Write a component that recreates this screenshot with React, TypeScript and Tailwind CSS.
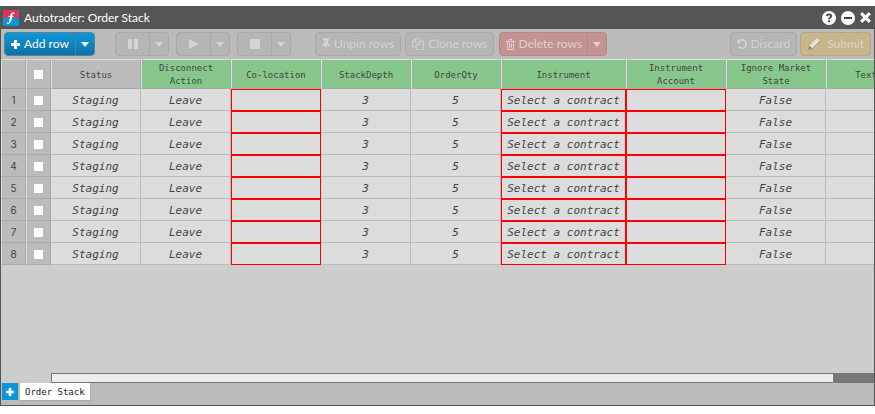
import type { ReactNode } from "react";

const columns = [
  { name: "Status", plain: true },
  { name: "Disconnect Action" },
  { name: "Co-location" },
  { name: "StackDepth" },
  { name: "OrderQty" },
  { name: "Instrument" },
  { name: "Instrument Account" },
  { name: "Ignore Market State" },
  { name: "Text" },
];

const rows = Array.from({ length: 8 }, () => ["Staging", "Leave", "", "3", "5", "Select a contract", "", "False", ""]);
const required = [2, 5, 6];

const grey = "border-[#a9a9a9] bg-[#b5b5b5] text-[#d4d4d4]";
const headCell = "border border-t-[#ddd] border-r-[#a9a9a9] border-b-[#a9a9a9] border-l-[#ddd]";
const sideCell = "border border-t-[#bbb] border-r-[#a9a9a9] border-b-[#a9a9a9] border-l-[#ddd] bg-[#bbb] p-0";

const paths = {
  clone:
    "M1696 384q40 0 68 28t28 68v1216q0 40-28 68t-68 28h-960q-40 0-68-28t-28-68v-288h-544q-40 0-68-28t-28-68v-672q0-40 20-88t48-76l408-408q28-28 76-48t88-20h416q40 0 68 28t28 68v328q68-40 128-40h416zm-544 213l-299 299h299v-299zm-640-384l-299 299h299v-299zm196 647l316-316v-416h-384v416q0 40-28 68t-68 28h-416v640h512v-256q0-40 20-88t48-76zm956 804v-1152h-384v416q0 40-28 68t-68 28h-416v640h896z",
  undo:
    "M1664 896q0 156-61 298t-164 245-245 164-298 61q-172 0-327-72.500t-264-204.500q-7-10-6.500-22.500t8.500-20.500l137-138q10-9 25-9 16 2 23 12 73 95 179 147t225 52q104 0 198.500-40.500t163.500-109.500 109.500-163.500 40.500-198.500-40.500-198.500-109.500-163.500-163.500-109.500-198.500-40.500q-98 0-188 35.500t-160 101.500l137 138q31 30 14 69-17 40-59 40h-448q-26 0-45-19t-19-45v-448q0-42 40-59 39-17 69 14l130 129q107-101 244.500-156.500t284.500-55.500q156 0 298 61t245 164 164 245 61 298z",
  pin:
    "M800 864v-448q0-14-9-23t-23-9-23 9-9 23v448q0 14 9 23t23 9 23-9 9-23zm672 352q0 26-19 45t-45 19h-429l-51 483q-2 12-10.500 20.500t-20.500 8.500h-1q-27 0-32-27l-76-485h-404q-26 0-45-19t-19-45q0-123 78.500-221.500t177.500-98.500v-512q-52 0-90-38t-38-90 38-90 90-38h640q52 0 90 38t38 90-38 90-90 38v512q99 0 177.500 98.500t78.500 221.500z",
};

function Glyph({ name, box = "0 0 1792 1792", className }: { name: keyof typeof paths; box?: string; className: string }) {
  return (
    <svg viewBox={box} className={`shrink-0 ${className}`} fill="currentColor" aria-hidden="true">
      <path d={paths[name]} />
    </svg>
  );
}

function Plus({ className }: { className: string }) {
  return (
    <svg viewBox="0 0 9 9" className={`shrink-0 ${className}`} stroke="currentColor" strokeWidth="3" aria-hidden="true">
      <path d="M4.500 0v9M0 4.500h9" />
    </svg>
  );
}

function Group({ label, children, tone = grey }: { label: string; children: ReactNode; tone?: string }) {
  return (
    <div className={`flex h-6 shrink-0 overflow-hidden rounded border ${tone}`}>
      {children}
      <button aria-label={`${label} options`} className="flex w-[19px] items-center justify-center border-l border-inherit">
        <svg viewBox="0 0 8 5" className="h-[5px] w-2" fill="currentColor" aria-hidden="true">
          <path d="M0 0h8L4 5z" />
        </svg>
      </button>
    </div>
  );
}

function Single({ children, tone = grey }: { children: ReactNode; tone?: string }) {
  return <button className={`flex h-6 shrink-0 items-center gap-1 whitespace-nowrap rounded border px-1.5 ${tone}`}>{children}</button>;
}

function Toolbar() {
  return (
    <div className="flex h-[30px] shrink-0 items-center bg-[#bbb] px-[3px] text-[12px]">
      <Group label="Add row" tone="border-[#57809a] bg-linear-to-b from-[#1097d8] to-[#0c74a8] text-white">
        <button className="flex w-[70px] items-center justify-center gap-1 whitespace-nowrap text-shadow-2xs">
          <Plus className="size-[9px]" />
          Add row
        </button>
      </Group>
      <div className="ml-5 flex gap-[7px]">
        <Group label="Pause">
          <button aria-label="Pause" className="flex w-[33px] items-center justify-center">
            <svg viewBox="0 0 10 10" className="size-2.5" fill="currentColor" aria-hidden="true">
              <path d="M0 0h4v10H0zM6 0h4v10H6z" />
            </svg>
          </button>
        </Group>
        <Group label="Play">
          <button aria-label="Play" className="flex w-[33px] items-center justify-center">
            <svg viewBox="0 0 10 10" className="size-2.5" fill="currentColor" aria-hidden="true">
              <path d="M0 0l10 5-10 5z" />
            </svg>
          </button>
        </Group>
        <Group label="Stop">
          <button aria-label="Stop" className="flex w-[33px] items-center justify-center">
            <span className="size-2.5 bg-current" />
          </button>
        </Group>
      </div>
      <div className="ml-6 flex gap-1">
        <Single><Glyph name="pin" box="320 100 1152 1692" className="h-3 w-2" />Unpin rows</Single>
        <Single><Glyph name="clone" className="size-3" />Clone rows</Single>
      </div>
      <div className="ml-[5px]">
        <Group label="Delete rows" tone="border-[#b58888] bg-[#c39393] text-[#e0d0d0]">
          <button className="flex w-[87px] items-center justify-center gap-1 whitespace-nowrap">
            <svg viewBox="0 0 9 11" className="h-[11px] w-[9px] shrink-0" fill="none" stroke="currentColor" aria-hidden="true">
              <path d="M0 2.500h9M3 2.500v-2h3v2M1.500 2.500v8h6v-8M3.500 4v5M5.500 4v5" />
            </svg>
            Delete rows
          </button>
        </Group>
      </div>
      <div className="ml-auto flex gap-[3px]">
        <Single><Glyph name="undo" box="128 128 1536 1536" className="size-2.5" />Discard</Single>
        <Single tone="border-[#b3a78c] bg-[#c9b58a] text-[#dcd6c8]">
          <svg viewBox="0 0 14 14" className="mr-0.5 size-3.5 shrink-0" aria-hidden="true">
            <path d="M1.500 12.500l1-4L10 1l3 3-7.500 7.500z" fill="#e8e4da" />
            <path d="M1 13l1.500-4.500L5.500 11.500z" fill="#8d8878" />
            <path d="M4.500 12.500L13 4" stroke="#9c968a" />
          </svg>
          Submit
        </Single>
      </div>
    </div>
  );
}

export default function App() {
  return (
    <div className="flex h-screen flex-col bg-white pt-1.5 pb-2 font-[Lato,sans-serif]">
      <main className="flex min-h-0 flex-1 flex-col border-x border-b border-[#555] bg-[#cdcdcd]">
        <header className="flex h-[23px] shrink-0 items-center bg-[#555] px-0.5 text-white">
          <svg viewBox="0 0 16 16" className="size-4" aria-hidden="true">
            <path fill="#d63a54" d="M0 0h16v8H0z" />
            <path fill="#0b95d8" d="M0 8h16v8H0z" />
            <path fill="none" stroke="#fff" strokeWidth="1.200" strokeLinecap="round" d="M11 3.400C9.700 2.100 8.900 3.400 8.500 5L7 11c-.5 2-1.300 2.900-2.500 2M6 6.500h4" />
            <path stroke="#fff" strokeWidth="2" d="M8.600 4.500L7.200 11" />
          </svg>
          <h1 className="ml-[5px] text-[12px]">Autotrader: Order Stack</h1>
          <div className="ml-auto flex items-center gap-[5px] pr-px">
            <button aria-label="Help">
              <svg viewBox="0 0 14 14" className="block size-3.5" aria-hidden="true">
                <circle cx="7" cy="7" r="7" fill="#fff" />
                <path d="M4.800 5.200C5 3.800 6 3.400 7 3.400c1.200 0 2.200.7 2.200 1.800C9.200 6.600 7 6.600 7 8.300" fill="none" stroke="#444" strokeWidth="1.800" />
                <path d="M6 9.300h2v1.900H6z" fill="#444" />
              </svg>
            </button>
            <button aria-label="Minimise">
              <svg viewBox="0 0 14 14" className="block size-3.5" aria-hidden="true">
                <circle cx="7" cy="7" r="7" fill="#fff" />
                <path d="M3 6h8v2H3z" fill="#444" />
              </svg>
            </button>
            <button aria-label="Close">
              <svg viewBox="0 0 11 11" className="block size-[11px]" stroke="#fff" strokeWidth="3.200" aria-hidden="true">
                <path d="M1.200 1.200l8.600 8.600M9.800 1.200L1.200 9.800" />
              </svg>
            </button>
          </div>
        </header>
        <Toolbar />
        <div className="min-h-0 flex-1 overflow-hidden font-['DejaVu_Sans_Mono',monospace] text-[#444]">
          <table className="w-[905px] table-fixed border-separate border-spacing-0">
            <colgroup>
              <col className="w-[25px]" />
              <col className="w-[25px]" />
              <col className="w-[90px]" />
              <col className="w-[90px]" />
              <col className="w-[90px]" />
              <col className="w-[90px]" />
              <col className="w-[90px]" />
              <col className="w-[125px]" />
              <col className="w-[100px]" />
              <col className="w-[100px]" />
              <col className="w-[80px]" />
            </colgroup>
            <thead>
              <tr className="h-[30px] text-[9px] leading-[13px]">
                <td className={`${headCell} bg-[#bbb] p-0`} />
                <th className={`${headCell} bg-[#bbb] p-0`}>
                  <input type="checkbox" aria-label="Select all rows" className="mx-auto block size-[9px] appearance-none bg-white" />
                </th>
                {columns.map((c) => (
                  <th key={c.name} scope="col" className={`${headCell} px-2 pt-0.5 pb-0 font-normal ${c.plain ? "bg-[#bbb]" : "bg-[#87c78b]"}`}>
                    {c.name}
                  </th>
                ))}
              </tr>
            </thead>
            <tbody>
              {rows.map((cells, r) => (
                <tr key={r} className="h-[22px] text-center text-[11px] leading-4">
                  <th scope="row" className={`${sideCell} font-[Inter,sans-serif] text-[10px] font-normal`}>{r + 1}</th>
                  <td className={sideCell}>
                    <input type="checkbox" aria-label={`Select row ${r + 1}`} className="mx-auto block size-[9px] appearance-none bg-white" />
                  </td>
                  {cells.map((text, c) => (
                    <td key={c} className={`overflow-hidden whitespace-nowrap bg-[#dcdcdc] px-0 pt-0.5 pb-0 italic ${required.includes(c) ? "border border-[#f00]" : "border-r border-b border-[#bbb]"}`}>
                      {text}
                    </td>
                  ))}
                </tr>
              ))}
            </tbody>
          </table>
        </div>
        <div className="ml-[50px] h-2.5 shrink-0 border-y border-l border-[#777] bg-[#777]">
          <div className="h-full w-[95%] bg-[#eee]" />
        </div>
        <footer className="flex h-[22px] shrink-0 items-start gap-0.5 bg-[#bbb] pl-px font-['DejaVu_Sans_Mono',monospace] text-[9px]">
          <button aria-label="Add tab" className="flex h-[17px] w-4 items-center justify-center bg-[#0b95d8] text-white"><Plus className="size-2" /></button>
          <button className="h-[17px] bg-white px-[5px] pt-0.5 text-[#222] shadow-[1px_1px_0_#a9a9a9]">Order Stack</button>
        </footer>
      </main>
    </div>
  );
}
